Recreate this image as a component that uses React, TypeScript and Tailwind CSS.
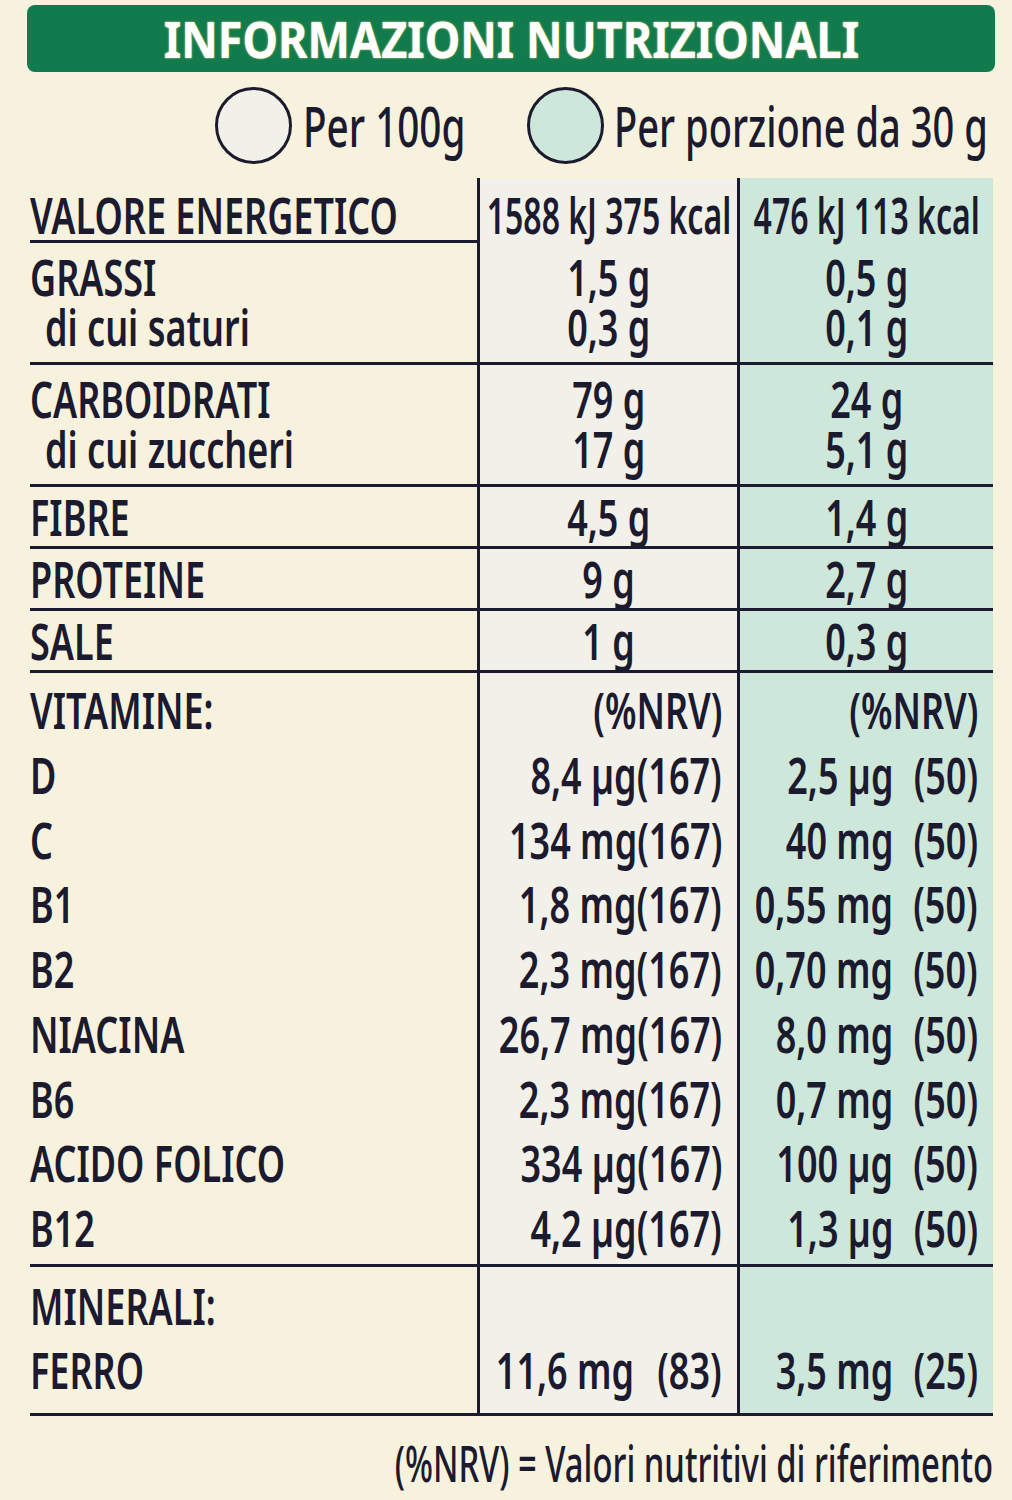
import type { ReactNode } from "react";

type Line = { label: string; a: string; b: string; indent?: boolean };

const blocks: Line[][] = [
  [
    { label: "GRASSI", a: "1,5 g", b: "0,5 g" },
    { label: "di cui saturi", a: "0,3 g", b: "0,1 g", indent: true },
  ],
  [
    { label: "CARBOIDRATI", a: "79 g", b: "24 g" },
    { label: "di cui zuccheri", a: "17 g", b: "5,1 g", indent: true },
  ],
  [{ label: "FIBRE", a: "4,5 g", b: "1,4 g" }],
  [{ label: "PROTEINE", a: "9 g", b: "2,7 g" }],
  [{ label: "SALE", a: "1 g", b: "0,3 g" }],
];

const vitamins = [
  ["D", "8,4 µg", "2,5 µg"],
  ["C", "134 mg", "40 mg"],
  ["B1", "1,8 mg", "0,55 mg"],
  ["B2", "2,3 mg", "0,70 mg"],
  ["NIACINA", "26,7 mg", "8,0 mg"],
  ["B6", "2,3 mg", "0,7 mg"],
  ["ACIDO FOLICO", "334 µg", "100 µg"],
  ["B12", "4,2 µg", "1,3 µg"],
];

const rowGrid = "grid grid-cols-[447px_260px_256px] border-t-[3px] border-[#1c1a2e]";
const mid = "border-l-[3px] border-[#1c1a2e] bg-[#f2f1e9]";
const side = "border-l-[3px] border-[#1c1a2e] bg-[#cde7da]";

// condensed text: the printed face is a narrow sans, so squeeze a regular one
function T({ children, className = "" }: { children: ReactNode; className?: string }) {
  return <span className={`inline-block shrink-0 whitespace-nowrap ${className}`}>{children}</span>;
}

function Block({ lines }: { lines: Line[] }) {
  const single = lines.length === 1;
  const box = single ? "flex flex-col justify-center h-[59px]" : "pt-[9px] pb-[10px]";
  return (
    <div className={rowGrid}>
      <div className={box}>
        {lines.map((l) => (
          <div key={l.label} className={`leading-[50px] ${l.indent ? "pl-[15px]" : ""}`}>
            <T className="scale-x-[0.72] origin-left">{l.label}</T>
          </div>
        ))}
      </div>
      <div className={`${mid} ${box}`}>
        {lines.map((l) => (
          <div key={l.a} className="leading-[50px] flex justify-center">
            <T className="scale-x-[0.72] origin-center">{l.a}</T>
          </div>
        ))}
      </div>
      <div className={`${side} ${box}`}>
        {lines.map((l) => (
          <div key={l.b} className="leading-[50px] flex justify-center">
            <T className="scale-x-[0.72] origin-center">{l.b}</T>
          </div>
        ))}
      </div>
    </div>
  );
}

function Circle({ fill }: { fill: string }) {
  return <div className={`w-[77px] h-[77px] shrink-0 rounded-full border-[3px] border-[#1c1a2e] ${fill}`} />;
}

export default function App() {
  return (
    <div
      className="w-[1012px] h-[1500px] bg-[#f6f2de] text-[#1c1a2e] font-semibold overflow-hidden"
      style={{ fontFamily: '"Noto Sans", "Open Sans", "DejaVu Sans", sans-serif' }}
    >
      <div className="pt-[5px] pl-[27px]">
        <div className="w-[968px] h-[67px] rounded-lg bg-[#127b4d] flex items-center justify-center">
          <T className="text-white font-bold text-[50px] leading-none scale-x-[0.9] origin-center [text-shadow:0_0_2px_#f3dc6c]">
            INFORMAZIONI NUTRIZIONALI
          </T>
        </div>
      </div>

      <div className="h-[106px] flex items-center pl-[215px] text-[56px] font-medium">
        <Circle fill="bg-[#f2f1e9]" />
        <div className="ml-[11px] w-[160px]">
          <T className="scale-x-[0.69] origin-left">Per 100g</T>
        </div>
        <div className="ml-[64px]">
          <Circle fill="bg-[#cde7da]" />
        </div>
        <div className="ml-[10px] w-[370px]">
          <T className="scale-x-[0.68] origin-left">Per porzione da 30 g</T>
        </div>
      </div>

      <div className="ml-[30px] w-[963px] text-[50px]">
        <div className="grid grid-cols-[447px_260px_256px] h-[62px]">
          <div className="flex items-center">
            <T className="scale-x-[0.72] origin-left">VALORE ENERGETICO</T>
          </div>
          <div className={`${mid} flex items-center justify-center`}>
            <T className="scale-x-[0.64] origin-center">1588 kJ 375 kcal</T>
          </div>
          <div className={`${side} flex items-center justify-center`}>
            <T className="scale-x-[0.64] origin-center">476 kJ 113 kcal</T>
          </div>
        </div>

        {blocks.map((b, i) => (
          <Block key={i} lines={b} />
        ))}

        <div className={rowGrid}>
          <div className="pt-[5px] pb-[3px] leading-[64.75px]">
            <div>
              <T className="scale-x-[0.72] origin-left">VITAMINE:</T>
            </div>
            {vitamins.map((v) => (
              <div key={v[0]}>
                <T className="scale-x-[0.72] origin-left">{v[0]}</T>
              </div>
            ))}
          </div>
          <div className={`${mid} pt-[5px] pr-[15px] leading-[64.75px]`}>
            <div className="flex justify-end">
              <T className="scale-x-[0.72] origin-right">(%NRV)</T>
            </div>
            {vitamins.map((v) => (
              <div key={v[0]} className="flex justify-end">
                <T className="scale-x-[0.72] origin-right">{v[1]}(167)</T>
              </div>
            ))}
          </div>
          <div className={`${side} pt-[5px] pr-[15px] leading-[64.75px]`}>
            <div className="flex justify-end">
              <T className="scale-x-[0.72] origin-right">(%NRV)</T>
            </div>
            {vitamins.map((v) => (
              <div key={v[0]} className="flex justify-end">
                <T className="scale-x-[0.72] origin-right">
                  <span className="inline-flex gap-[28px]">
                    <span>{v[2]}</span>
                    <span>(50)</span>
                  </span>
                </T>
              </div>
            ))}
          </div>
        </div>

        <div className={rowGrid}>
          <div className="pt-[7px] pb-[11px] leading-[64px]">
            <div>
              <T className="scale-x-[0.72] origin-left">MINERALI:</T>
            </div>
            <div>
              <T className="scale-x-[0.72] origin-left">FERRO</T>
            </div>
          </div>
          <div className={`${mid} pt-[7px] pr-[15px] leading-[64px]`}>
            <div>&nbsp;</div>
            <div className="flex justify-end">
              <T className="scale-x-[0.72] origin-right">
                <span className="inline-flex gap-[32px]">
                  <span>11,6 mg</span>
                  <span>(83)</span>
                </span>
              </T>
            </div>
          </div>
          <div className={`${side} pt-[7px] pr-[15px] leading-[64px]`}>
            <div>&nbsp;</div>
            <div className="flex justify-end">
              <T className="scale-x-[0.72] origin-right">
                <span className="inline-flex gap-[28px]">
                  <span>3,5 mg</span>
                  <span>(25)</span>
                </span>
              </T>
            </div>
          </div>
        </div>

        <div className="border-t-[3px] border-[#1c1a2e]" />

        <div className="mt-[22px] leading-[50px] flex justify-end">
          <T className="scale-x-[0.656] origin-right font-medium">(%NRV) = Valori nutritivi di riferimento</T>
        </div>
      </div>
    </div>
  );
}
